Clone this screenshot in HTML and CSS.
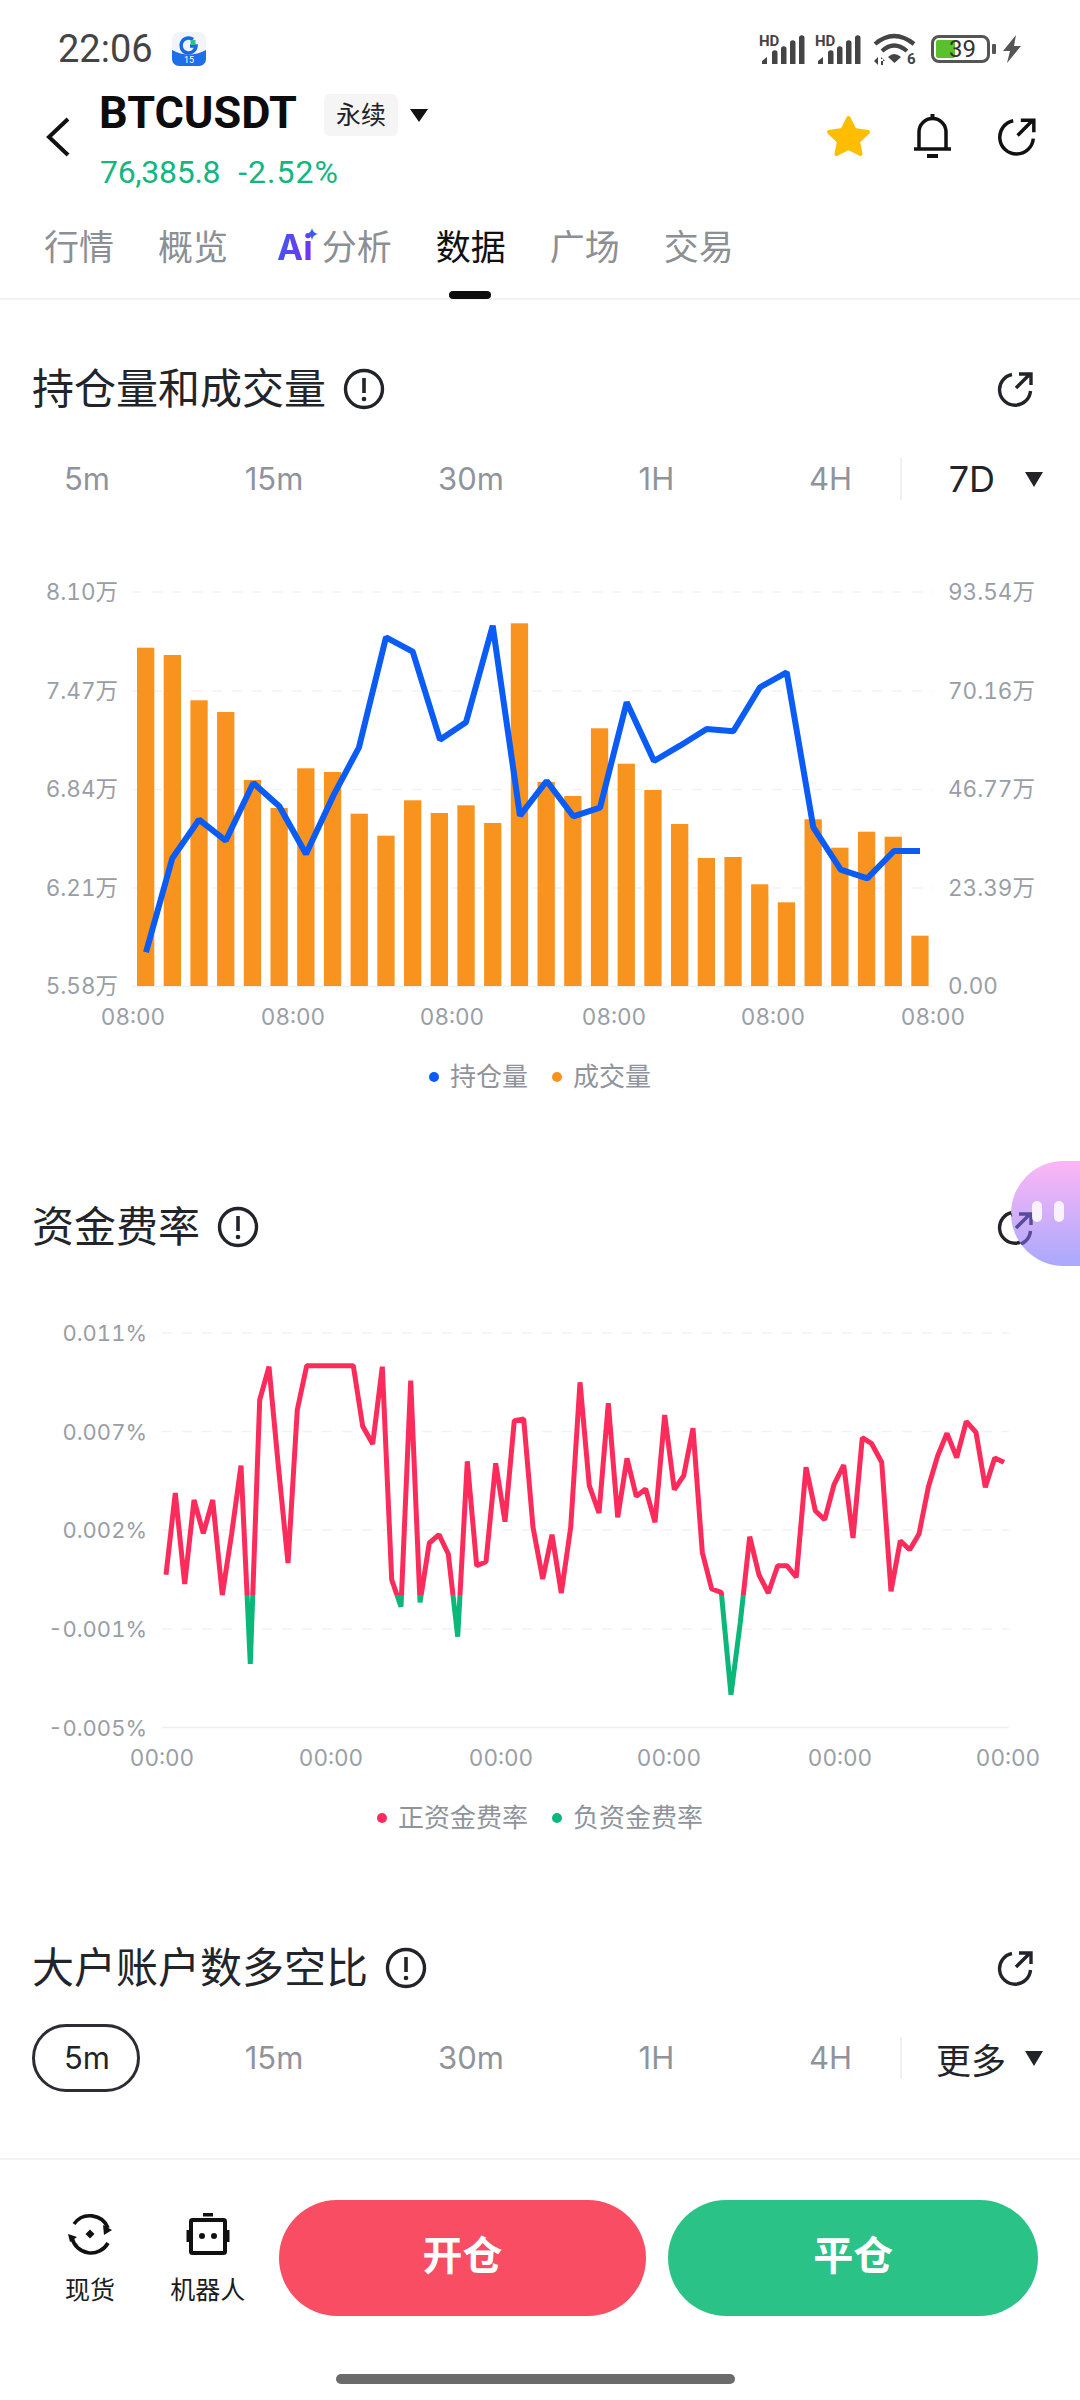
FILE: index.html
```html
<!DOCTYPE html>
<html lang="zh-CN">
<head>
    <meta charset="UTF-8">
    <meta name="viewport" content="width=device-width, initial-scale=1.0">
    <title>BTCUSDT 数据</title>
    <link rel="stylesheet" href="styles.css">
</head>
<body>
    <div class="status-bar">
        <div class="status-left">
            <span class="time">22:06</span>
            <svg class="app-icon" viewBox="0 0 34 34">
                <rect width="34" height="34" rx="7" fill="#f1f4f9"/>
                <path d="M0 18 Q17 27 34 18 V27 a7 7 0 0 1 -7 7 H7 a7 7 0 0 1 -7 -7 Z" fill="#1f6fe8"/>
                <path d="M21 7.500 A7.500 7.500 0 1 0 24 14 H18" fill="none" stroke="#1668e3" stroke-width="3.500"/>
                <path d="M18.500 8 h5 v5 h-5 Z" fill="#2fc08a"/>
                <text class="app-icon-num" x="17" y="31" text-anchor="middle">15</text>
            </svg>
        </div>
        <div class="status-right">
            <svg class="signal" viewBox="0 -5 46 40">
                <text class="signal-hd" x="0" y="12">HD</text>
                <path d="M3 30 v-3 l5 -4 v7 Z M13 30 v-11 a2.500 2.500 0 0 1 5.500 0 v11 Z M22 30 v-15 a2.500 2.500 0 0 1 5.500 0 v15 Z M31 30 v-21 a2.500 2.500 0 0 1 5.500 0 v21 Z M40 30 v-26 a2.500 2.500 0 0 1 5.500 0 v26 Z" fill="#444"/>
            </svg>
            <svg class="signal" viewBox="0 -5 46 40">
                <text class="signal-hd" x="0" y="12">HD</text>
                <path d="M3 30 v-3 l5 -4 v7 Z M13 30 v-11 a2.500 2.500 0 0 1 5.500 0 v11 Z M22 30 v-15 a2.500 2.500 0 0 1 5.500 0 v15 Z M31 30 v-21 a2.500 2.500 0 0 1 5.500 0 v21 Z M40 30 v-26 a2.500 2.500 0 0 1 5.500 0 v26 Z" fill="#444"/>
            </svg>
            <svg class="wifi" viewBox="0 -4 44 40">
                <path d="M2 11 Q21 -5 41 11" fill="none" stroke="#444" stroke-width="4.200"/>
                <path d="M9 18 Q21 7 34 18" fill="none" stroke="#444" stroke-width="4.200"/>
                <path d="M15 24 Q21 18 28 24 L21.500 30 Z" fill="#444"/>
                <path d="M1 28 l4 -4 v8 Z M8 24 l4 4 h-4 Z M8 26 v6 h2 v-6 Z" fill="#444"/>
                <text class="wifi-num" x="34" y="31">6</text>
            </svg>
            <div class="battery">
                <div class="battery-fill"></div>
                <span class="battery-num">39</span>
            </div>
            <div class="battery-nub"></div>
            <svg class="bolt" viewBox="0 0 18 28">
                <path d="M13 0 L0 16 H7 L4 28 L18 11 H11 Z" fill="#555"/>
            </svg>
        </div>
    </div>

    <div class="header">
        <svg class="back" viewBox="0 0 24 40">
            <polyline points="22,2 3,20 22,38" fill="none" stroke="#111" stroke-width="4"/>
        </svg>
        <div class="symbol-col">
            <div class="symbol-row">
                <span class="symbol">BTCUSDT</span>
                <span class="tag">永续</span>
                <span class="tri tri-small"></span>
            </div>
            <div class="price-row">
                <span class="price-last">76,385.8</span>
                <span class="price-change">-2.52%</span>
            </div>
        </div>
        <div class="header-actions">
            <svg class="star" viewBox="0 0 45 42">
                <polygon points="22.5,3 28.5,15 42,17 32,26.500 34.500,39 22.500,33 10.500,39 13,26.500 3,17 16.500,15" fill="#ffbd00" stroke="#ffbd00" stroke-width="4" stroke-linejoin="round"/>
            </svg>
            <svg class="bell" viewBox="0 0 37 44">
                <path d="M18.500 0 V5" stroke="#111" stroke-width="4" fill="none"/>
                <path d="M5 34 V18 a13.500 13.500 0 0 1 27 0 V34" fill="none" stroke="#111" stroke-width="3.500"/>
                <path d="M0 35 H37" stroke="#111" stroke-width="3.500"/>
                <rect x="13" y="40" width="11" height="4" fill="#111"/>
            </svg>
            <svg class="share-top" viewBox="0 0 36 36">
                <path d="M15 3.500 A15.500 15.500 0 1 0 33.500 20" fill="none" stroke="#111" stroke-width="3.200"/>
                <path d="M19 17 L33 3 M22 3 H34 V14" fill="none" stroke="#111" stroke-width="3.200"/>
            </svg>
        </div>
    </div>

    <div class="tabs">
        <span class="tab">行情</span>
        <span class="tab">概览</span>
        <span class="tab tab-ai">
            <span class="ai-mark">Ai<svg class="ai-spark" viewBox="0 0 12 12"><path d="M6 0 Q6.800 5.200 12 6 Q6.800 6.800 6 12 Q5.200 6.800 0 6 Q5.200 5.200 6 0 Z" fill="#3d5af1"/></svg></span>
            分析
        </span>
        <span class="tab tab-active">数据</span>
        <span class="tab">广场</span>
        <span class="tab">交易</span>
    </div>

    <div class="content">
        <!-- open interest and volume -->
        <section class="section section-first">
            <div class="section-head">
                <h2 class="section-title">持仓量和成交量</h2>
                <svg class="info" viewBox="0 0 42 42">
                    <circle cx="21" cy="21" r="18.500" fill="none" stroke="#22242a" stroke-width="3.400"/>
                    <path d="M21 10 V25" stroke="#22242a" stroke-width="3.600"/>
                    <circle cx="21" cy="31" r="2.300" fill="#22242a"/>
                </svg>
                <svg class="share" viewBox="0 0 36 36">
                    <path d="M15 3.500 A15.500 15.500 0 1 0 33.500 20" fill="none" stroke="#22242a" stroke-width="3.400"/>
                    <path d="M19 17 L33 3 M22 3 H34 V14" fill="none" stroke="#22242a" stroke-width="3.400"/>
                </svg>
            </div>
            <div class="range-row">
                <div class="range-list">
                    <span class="range">5m</span>
                    <span class="range">15m</span>
                    <span class="range">30m</span>
                    <span class="range">1H</span>
                    <span class="range">4H</span>
                </div>
                <span class="range-divider"></span>
                <span class="range-more">7D<span class="tri"></span></span>
            </div>
            <svg class="chart chart-oi" viewBox="0 560 1080 480">
                <g class="grid">
                    <line x1="132" y1="593" x2="933" y2="593"/>
                    <line x1="132" y1="692" x2="933" y2="692"/>
                    <line x1="132" y1="790.500" x2="933" y2="790.500"/>
                    <line x1="132" y1="889" x2="933" y2="889"/>
                    <line class="grid-base" x1="132" y1="987.500" x2="933" y2="987.500"/>
                </g>
                <g class="axis-label anchor-end">
                    <text x="118" y="601">8.10万</text>
                    <text x="118" y="700">7.47万</text>
                    <text x="118" y="798">6.84万</text>
                    <text x="118" y="897">6.21万</text>
                    <text x="118" y="995">5.58万</text>
                </g>
                <g class="axis-label">
                    <text x="948" y="601">93.54万</text>
                    <text x="948" y="700">70.16万</text>
                    <text x="948" y="798">46.77万</text>
                    <text x="948" y="897">23.39万</text>
                    <text x="948" y="995">0.00</text>
                </g>
                <g class="bars">
                    <rect x="137" y="648.700" width="17.300" height="338.300"/>
                    <rect x="163.700" y="656" width="17.300" height="331"/>
                    <rect x="190.400" y="701.300" width="17.300" height="285.700"/>
                    <rect x="217.100" y="713" width="17.300" height="274"/>
                    <rect x="243.800" y="781" width="17.300" height="206"/>
                    <rect x="270.500" y="809" width="17.300" height="178"/>
                    <rect x="297.200" y="769.300" width="17.300" height="217.700"/>
                    <rect x="323.900" y="773" width="17.300" height="214"/>
                    <rect x="350.600" y="814.700" width="17.300" height="172.300"/>
                    <rect x="377.300" y="836.700" width="17.300" height="150.300"/>
                    <rect x="404" y="801.300" width="17.300" height="185.700"/>
                    <rect x="430.700" y="814" width="17.300" height="173"/>
                    <rect x="457.400" y="806.300" width="17.300" height="180.700"/>
                    <rect x="484.100" y="824" width="17.300" height="163"/>
                    <rect x="510.800" y="624.300" width="17.300" height="362.700"/>
                    <rect x="537.500" y="783" width="17.300" height="204"/>
                    <rect x="564.200" y="797" width="17.300" height="190"/>
                    <rect x="590.900" y="729.300" width="17.300" height="257.700"/>
                    <rect x="617.600" y="764.700" width="17.300" height="222.300"/>
                    <rect x="644.300" y="791" width="17.300" height="196"/>
                    <rect x="671" y="825" width="17.300" height="162"/>
                    <rect x="697.700" y="859" width="17.300" height="128"/>
                    <rect x="724.400" y="858" width="17.300" height="129"/>
                    <rect x="751.100" y="885.300" width="17.300" height="101.700"/>
                    <rect x="777.800" y="903.300" width="17.300" height="83.700"/>
                    <rect x="804.500" y="820.300" width="17.300" height="166.700"/>
                    <rect x="831.200" y="848.700" width="17.300" height="138.300"/>
                    <rect x="857.900" y="832.700" width="17.300" height="154.300"/>
                    <rect x="884.600" y="837.700" width="17.300" height="149.300"/>
                    <rect x="911.300" y="936.700" width="17.300" height="50.300"/>
                </g>
                <polyline class="line-oi" points="146,953.300 172.300,859.300 199,820.700 225.700,841.700 253.300,784 279.300,807.300 306,855 333.300,796.700 359,748.300 386,638.300 412.700,652.700 440,740.700 466,723.300 492.700,626.700 520,816.700 546.700,782 573.300,817.300 600,808.700 626.700,703.300 654,762 680,746.700 706.700,730 733.300,732.300 760,688.300 786.700,673.300 813.300,828.300 840.700,870.700 867.300,879.300 894,852 920,852"/>
                <g class="axis-label anchor-mid">
                    <text x="133" y="1026">08:00</text>
                    <text x="293" y="1026">08:00</text>
                    <text x="452" y="1026">08:00</text>
                    <text x="614" y="1026">08:00</text>
                    <text x="773" y="1026">08:00</text>
                    <text x="933" y="1026">08:00</text>
                </g>
            </svg>
            <div class="legend legend-oi">
                <span class="legend-item"><i class="dot dot-blue"></i>持仓量</span>
                <span class="legend-item"><i class="dot dot-orange"></i>成交量</span>
            </div>
        </section>

        <!-- funding rate -->
        <section class="section section-funding">
            <div class="section-head">
                <h2 class="section-title">资金费率</h2>
                <svg class="info" viewBox="0 0 42 42">
                    <circle cx="21" cy="21" r="18.500" fill="none" stroke="#22242a" stroke-width="3.400"/>
                    <path d="M21 10 V25" stroke="#22242a" stroke-width="3.600"/>
                    <circle cx="21" cy="31" r="2.300" fill="#22242a"/>
                </svg>
                <svg class="share" viewBox="0 0 36 36">
                    <path d="M15 3.500 A15.500 15.500 0 1 0 33.500 20" fill="none" stroke="#22242a" stroke-width="3.400"/>
                    <path d="M19 17 L33 3 M22 3 H34 V14" fill="none" stroke="#22242a" stroke-width="3.400"/>
                </svg>
            </div>
            <svg class="chart chart-funding" viewBox="0 1310 1080 470">
                <defs>
                    <clipPath id="aboveZero"><rect x="150" y="1310" width="870" height="286"/></clipPath>
                    <clipPath id="belowZero"><rect x="150" y="1596" width="870" height="140"/></clipPath>
                    <polyline id="fundingLine" points="166,1575.700 175.300,1494 184.700,1585 194,1501 203.300,1534.300 212.700,1501 222.300,1596 231.700,1534.300 241,1466.700 250.300,1665 259.700,1401 269,1367.700 278.300,1466.700 288,1564 297.300,1410.700 306.700,1366.700 353.300,1366.700 362.700,1427.300 372.700,1445 382.300,1367.700 391.700,1580.700 401,1607.700 410.700,1381.700 420,1603.300 429.300,1544 439,1535.700 448.300,1555 457.700,1637.700 467.300,1462.300 476.700,1566.700 486,1562.700 495.700,1464.300 505,1522.700 514.300,1421.700 523.700,1420 533,1528.300 542.700,1580 552,1535.700 561.300,1594 570.700,1528.300 580,1383.300 589.300,1486.700 599,1514 608.300,1404.300 617.700,1518.300 627,1459.300 636.300,1497.300 645.700,1490 655,1523.300 664.700,1416 674.300,1490.700 683.700,1476.700 693,1429.300 702.300,1553.300 711.700,1590 721.300,1593.300 731,1695.700 740.300,1623.300 749.700,1537.700 759,1576 768.300,1594 777.700,1566.700 787,1566.700 796.300,1578.300 806,1468.300 815.300,1511.700 824.700,1520.700 834,1485.700 843.700,1466 853,1539 862.300,1438.700 871.700,1444.700 881.700,1463.300 891,1592.300 900.300,1541.700 909.700,1550.700 919,1535 928.300,1488.300 937.700,1456.700 947,1434.300 956.700,1458.700 966.300,1422.300 976,1433.300 985.300,1488.300 994.700,1459 1004,1463.300"/>
                </defs>
                <g class="grid">
                    <line x1="162" y1="1334" x2="1009" y2="1334"/>
                    <line x1="162" y1="1432.500" x2="1009" y2="1432.500"/>
                    <line x1="162" y1="1531" x2="1009" y2="1531"/>
                    <line x1="162" y1="1630" x2="1009" y2="1630"/>
                    <line class="grid-base" x1="162" y1="1728.500" x2="1009" y2="1728.500"/>
                </g>
                <g class="axis-label axis-pct anchor-end">
                    <text x="147" y="1342">0.011%</text>
                    <text x="147" y="1441">0.007%</text>
                    <text x="147" y="1539">0.002%</text>
                    <text x="147" y="1638">-0.001%</text>
                    <text x="147" y="1737">-0.005%</text>
                </g>
                <use href="#fundingLine" class="line-pos" clip-path="url(#aboveZero)"/>
                <use href="#fundingLine" class="line-neg" clip-path="url(#belowZero)"/>
                <g class="axis-label anchor-mid">
                    <text x="162" y="1767">00:00</text>
                    <text x="331" y="1767">00:00</text>
                    <text x="501" y="1767">00:00</text>
                    <text x="669" y="1767">00:00</text>
                    <text x="840" y="1767">00:00</text>
                    <text x="1008" y="1767">00:00</text>
                </g>
            </svg>
            <div class="legend legend-funding">
                <span class="legend-item"><i class="dot dot-red"></i>正资金费率</span>
                <span class="legend-item"><i class="dot dot-green"></i>负资金费率</span>
            </div>
            <div class="float-bubble">
                <svg class="bubble-share" viewBox="0 0 36 36">
                    <path d="M15 3.500 A15.500 15.500 0 1 0 33.500 20" fill="none" stroke="#5a4a9c" stroke-width="3.400"/>
                    <path d="M19 17 L33 3 M22 3 H34 V14" fill="none" stroke="#5a4a9c" stroke-width="3.400"/>
                </svg>
                <i class="bubble-eye"></i>
                <i class="bubble-eye"></i>
            </div>
        </section>

        <!-- top accounts long/short -->
        <section class="section section-ratio">
            <div class="section-head">
                <h2 class="section-title">大户账户数多空比</h2>
                <svg class="info" viewBox="0 0 42 42">
                    <circle cx="21" cy="21" r="18.500" fill="none" stroke="#22242a" stroke-width="3.400"/>
                    <path d="M21 10 V25" stroke="#22242a" stroke-width="3.600"/>
                    <circle cx="21" cy="31" r="2.300" fill="#22242a"/>
                </svg>
                <svg class="share" viewBox="0 0 36 36">
                    <path d="M15 3.500 A15.500 15.500 0 1 0 33.500 20" fill="none" stroke="#22242a" stroke-width="3.400"/>
                    <path d="M19 17 L33 3 M22 3 H34 V14" fill="none" stroke="#22242a" stroke-width="3.400"/>
                </svg>
            </div>
            <div class="range-row">
                <div class="range-list">
                    <span class="range range-active">5m</span>
                    <span class="range">15m</span>
                    <span class="range">30m</span>
                    <span class="range">1H</span>
                    <span class="range">4H</span>
                </div>
                <span class="range-divider"></span>
                <span class="range-more range-more-cn">更多<span class="tri"></span></span>
            </div>
        </section>
    </div>

    <div class="bottom-bar">
        <div class="bottom-actions">
            <div class="tool tool-spot">
                <svg class="tool-icon" viewBox="0 0 44 44">
                    <path d="M6 12 A19.500 19.500 0 0 1 40 16" fill="none" stroke="#111" stroke-width="3.600"/>
                    <path d="M35 13 L44 18 L36 23 Z" fill="#111"/>
                    <path d="M40 31 A19.500 19.500 0 0 1 4 26" fill="none" stroke="#111" stroke-width="3.600"/>
                    <path d="M0 22 L9 25 L2 30 Z" fill="#111"/>
                    <path d="M22 17.500 L26.500 22 L22 26.500 L17.500 22 Z" fill="#111"/>
                </svg>
                <span class="tool-label">现货</span>
            </div>
            <div class="tool tool-robot">
                <svg class="tool-icon" viewBox="0 0 44 44">
                    <rect x="17" y="1" width="10" height="3.500" fill="#111"/>
                    <rect x="5" y="8" width="34" height="33" rx="1.500" fill="none" stroke="#111" stroke-width="4"/>
                    <rect x="0.500" y="18" width="3.500" height="12" fill="#111"/>
                    <rect x="40" y="18" width="3.500" height="12" fill="#111"/>
                    <circle cx="16" cy="24" r="3" fill="#111"/>
                    <circle cx="28" cy="24" r="3" fill="#111"/>
                </svg>
                <span class="tool-label">机器人</span>
            </div>
            <button class="trade-btn trade-open">开仓</button>
            <button class="trade-btn trade-close">平仓</button>
        </div>
        <div class="home-bar"></div>
    </div>
</body>
</html>
```

FILE: styles.css
```css
* {
    box-sizing: border-box;
}

body {
    margin: 0;
    width: 1080px;
    height: 2400px;
    overflow: hidden;
    display: flex;
    flex-direction: column;
    background: #fff;
    color: #22242a;
    font-family: Inter, "Noto Sans CJK SC", sans-serif;
}

/* status bar */
.status-bar {
    height: 90px;
    padding: 8px 59px 0 58px;
    display: flex;
    align-items: center;
    justify-content: space-between;
}

.status-left {
    display: flex;
    align-items: center;
    gap: 19px;
}

.time {
    font-family: Roboto, sans-serif;
    font-size: 38px;
    color: #444;
}

.app-icon {
    width: 34px;
    height: 34px;
}

.app-icon-num {
    font-family: Roboto, sans-serif;
    font-size: 9px;
    fill: #fff;
}

.status-right {
    display: flex;
    align-items: center;
}

.signal {
    width: 46px;
    height: 40px;
    margin-right: 10px;
}

.signal-hd {
    font-family: Roboto, sans-serif;
    font-size: 15px;
    font-weight: 700;
    fill: #444;
}

.wifi {
    width: 44px;
    height: 40px;
    margin: 0 14px 0 2px;
}

.wifi-num {
    font-family: Roboto, sans-serif;
    font-size: 15px;
    font-weight: 700;
    fill: #444;
}

.battery {
    position: relative;
    width: 59px;
    height: 28px;
    border: 3px solid #555;
    border-radius: 8px;
}

.battery-fill {
    position: absolute;
    left: 2px;
    top: 2px;
    bottom: 2px;
    width: 19px;
    background: #5bc02d;
    border-radius: 2px;
}

.battery-num {
    position: absolute;
    left: 15px;
    top: -3px;
    font-family: Roboto, sans-serif;
    font-size: 24px;
    line-height: 28px;
    color: #333;
}

.battery-nub {
    width: 4px;
    height: 10px;
    margin: 0 7px 0 2px;
    background: #555;
    border-radius: 1px;
}

.bolt {
    width: 18px;
    height: 28px;
}

/* header */
.header {
    height: 100px;
    padding-left: 46px;
    display: flex;
    align-items: flex-start;
}

.back {
    width: 24px;
    height: 40px;
    margin-top: 27px;
}

.symbol-col {
    margin-left: 29px;
}

.symbol-row {
    display: flex;
    align-items: center;
}

.symbol {
    font-family: Roboto, sans-serif;
    font-size: 45px;
    font-weight: 700;
    line-height: 44px;
    color: #0c0c0c;
}

.tag {
    margin: 4px 0 0 27px;
    padding: 0 12px;
    height: 42px;
    line-height: 42px;
    font-size: 25px;
    background: #f5f5f5;
    border-radius: 6px;
    color: #222;
}

.tri {
    width: 0;
    height: 0;
    border-left: 9.5px solid transparent;
    border-right: 9.5px solid transparent;
    border-top: 15px solid #22242a;
}

.tri-small {
    margin: 4px 0 0 12px;
    border-left-width: 9px;
    border-right-width: 9px;
    border-top-width: 13px;
    border-top-color: #111;
}

.price-row {
    margin: 16px 0 0 1px;
    display: flex;
    gap: 18px;
    font-family: Roboto, sans-serif;
    font-size: 32px;
    line-height: 40px;
    color: #12b67f;
}

.price-last {
    letter-spacing: -0.3px;
}

.price-change {
    letter-spacing: 1px;
}

.header-actions {
    margin-left: auto;
    padding: 24px 44px 0 0;
    display: flex;
    align-items: center;
    gap: 43px;
}

.star {
    width: 45px;
    height: 42px;
}

.bell {
    width: 37px;
    height: 44px;
    margin-right: 3px;
}

.share-top {
    width: 39px;
    height: 39px;
}

/* tabs */
.tabs {
    height: 110px;
    padding: 37px 0 0 44px;
    display: flex;
    align-items: flex-start;
    gap: 44px;
    border-bottom: 2px solid #f1f3f4;
}

.tab {
    position: relative;
    font-size: 35px;
    line-height: 40px;
    color: #8c8f93;
}

.tab-active {
    color: #111;
}

.tab-active::after {
    content: "";
    position: absolute;
    left: 13px;
    top: 64px;
    width: 42px;
    height: 8px;
    background: #0c0c0c;
    border-radius: 4px;
}

.tab-ai {
    margin-left: 5px;
    display: flex;
    gap: 9px;
}

.ai-mark {
    position: relative;
    font-size: 35px;
    font-weight: 700;
    background: linear-gradient(100deg, #3d5af1, #7a2ff0);
    -webkit-background-clip: text;
    background-clip: text;
    color: transparent;
}

.ai-spark {
    position: absolute;
    right: -5px;
    top: 1px;
    width: 12px;
    height: 12px;
}

/* sections */
.content {
    flex: 1;
    overflow: hidden;
}

.section {
    position: relative;
}

.section-first {
    padding-top: 67px;
}

.section-funding {
    margin-top: 111px;
}

.section-ratio {
    margin-top: 111px;
}

.section-head {
    height: 44px;
    padding: 0 47px 0 32px;
    display: flex;
    align-items: center;
}

.section-title {
    margin: 0 17px 0 0;
    font-size: 42px;
    font-weight: 400;
    line-height: 44px;
    color: #22242a;
}

.info {
    width: 42px;
    height: 42px;
}

.section-head .share {
    width: 36px;
    height: 36px;
    margin-left: auto;
}

.range-row {
    height: 68px;
    margin-top: 34px;
    padding: 0 37px 0 32px;
    display: flex;
    align-items: center;
}

.range-list {
    display: flex;
    gap: 70.700px;
}

.range {
    height: 68px;
    padding: 0 32px;
    font-size: 31px;
    line-height: 68px;
    color: #8f949c;
}

.range-active {
    margin-right: 2.5px;
    padding: 0 26.5px 0 29px;
    line-height: 62px;
    color: #22242a;
    border: 3px solid #2b2d33;
    border-radius: 34px;
}

.range-divider {
    width: 2px;
    height: 42px;
    margin-left: 16px;
    background: #eef0f5;
}

.range-more {
    margin-left: auto;
    display: flex;
    align-items: center;
    gap: 30px;
    font-size: 36px;
    white-space: nowrap;
    color: #22242a;
}

.range-more-cn {
    gap: 19px;
    font-size: 35px;
}

/* charts */
.chart {
    display: block;
    width: 1080px;
}

.chart-oi {
    height: 480px;
    margin-top: 46px;
}

.chart-funding {
    height: 470px;
    margin-top: 60px;
}

.grid line {
    stroke: #f0f2f8;
    stroke-width: 1.500;
    stroke-dasharray: 10 10;
}

.grid .grid-base {
    stroke: #eef0f6;
    stroke-dasharray: none;
}

.axis-label {
    font-size: 22.500px;
    font-feature-settings: "tnum";
    fill: #999ea6;
}

.axis-pct {
    font-size: 22px;
}

.anchor-end {
    text-anchor: end;
}

.anchor-mid {
    text-anchor: middle;
}

.bars rect {
    fill: #f7931e;
}

.line-oi {
    fill: none;
    stroke: #0a5cf5;
    stroke-width: 6;
    stroke-linejoin: bevel;
}

.line-pos,
.line-neg {
    fill: none;
    stroke-width: 5;
    stroke-linejoin: bevel;
}

.line-pos {
    stroke: #fb2c5b;
}

.line-neg {
    stroke: #0bb87a;
}

.legend {
    height: 34px;
    display: flex;
    justify-content: center;
    gap: 24px;
    font-size: 26px;
    line-height: 34px;
    color: #8f949c;
}

.legend-oi {
    margin-top: 21px;
}

.legend-funding {
    margin-top: 22px;
}

.legend-item {
    display: flex;
    align-items: center;
    gap: 11px;
}

.dot {
    width: 10px;
    height: 10px;
    border-radius: 50%;
}

.dot-blue {
    background: #0a5cf5;
}

.dot-orange {
    background: #f7931e;
}

.dot-red {
    background: #fb2c5b;
}

.dot-green {
    background: #0bb87a;
}

/* floating assistant, sits over the share icon */
.float-bubble {
    position: absolute;
    right: 0;
    top: -44px;
    width: 69px;
    height: 105px;
    padding: 40px 0 0 21px;
    display: flex;
    align-items: flex-start;
    gap: 12px;
    overflow: hidden;
    background: linear-gradient(180deg, #fdb6f5, #a9a9fc);
    border-radius: 53px 0 0 53px;
}

.bubble-share {
    position: absolute;
    left: -14px;
    top: 50px;
    width: 36px;
    height: 36px;
}

.bubble-eye {
    position: relative;
    width: 10px;
    height: 21px;
    background: #fff;
    border-radius: 5px;
    opacity: 0.85;
}

/* bottom bar */
.bottom-bar {
    height: 242px;
    border-top: 2px solid #f2f3f5;
}

.bottom-actions {
    padding: 40px 42px 0 0;
    display: flex;
    align-items: flex-start;
}

.tool {
    display: flex;
    flex-direction: column;
    align-items: center;
    gap: 21px;
}

.tool-spot {
    width: 100px;
    margin-left: 40px;
}

.tool-robot {
    width: 76px;
    margin-left: 30px;
}

.tool-icon {
    width: 44px;
    height: 44px;
    margin-top: 12px;
}

.tool-label {
    font-size: 25px;
    line-height: 26px;
    color: #1c1c1c;
}

.trade-btn {
    width: 368px;
    height: 116px;
    padding: 0 0 10px;
    border: none;
    border-radius: 58px;
    font-family: inherit;
    font-size: 40px;
    font-weight: 700;
    color: #fff;
}

.trade-open {
    margin-left: 33px;
    background: #f94d63;
}

.trade-close {
    margin-left: 22px;
    width: 370px;
    background: #2bc287;
}

.home-bar {
    width: 399px;
    height: 10px;
    margin: 58px 0 0 336px;
    background: #6b6b6b;
    border-radius: 5px;
}
```
